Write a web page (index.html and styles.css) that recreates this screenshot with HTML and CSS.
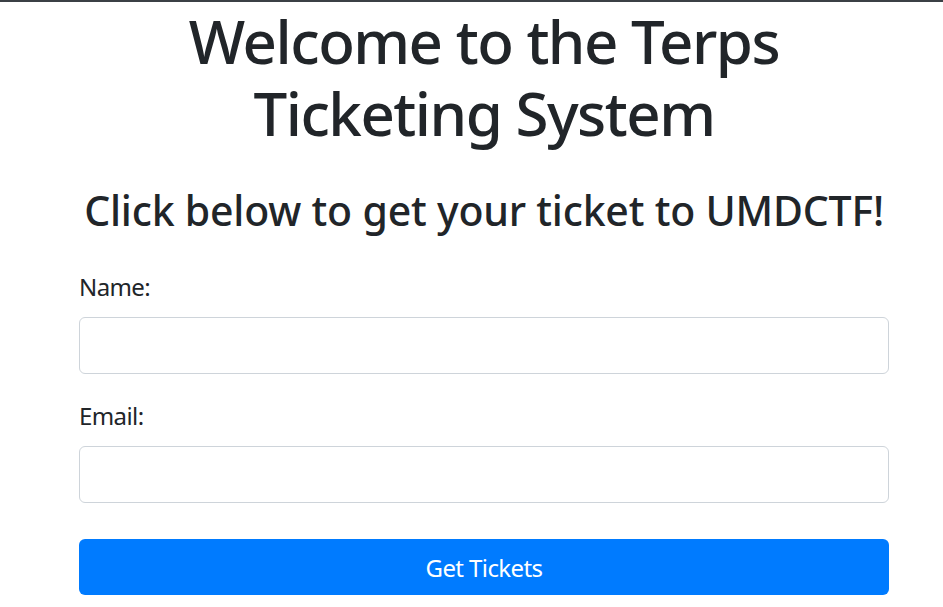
FILE: index.html
```html
<!DOCTYPE html>
<html lang="en">
<head>
<meta charset="utf-8">
<title>Terps Ticketing System</title>
<link rel="stylesheet" href="styles.css">
</head>
<body>
<div class="topbar"></div>
<main class="container">
  <h1 class="title">Welcome to the Terps Ticketing System</h1>
  <h3 class="subtitle">Click below to get your ticket to UMDCTF!</h3>
  <form class="ticket-form">
    <div class="form-group">
      <label class="form-label" for="name">Name:</label>
      <input class="form-control" type="text" id="name" name="name">
    </div>
    <div class="form-group">
      <label class="form-label" for="email">Email:</label>
      <input class="form-control" type="email" id="email" name="email">
    </div>
    <button class="btn-primary" type="button">Get Tickets</button>
  </form>
</main>
</body>
</html>
```

FILE: styles.css
```css
html, body {
  margin: 0;
  padding: 0;
  background: #ffffff;
}
body {
  font-family: "Noto Sans", "Open Sans", sans-serif;
  color: #212529;
}
.topbar {
  height: 2px;
  background: #3b4045;
}
.container {
  width: 810px;
  margin-left: 79px;
}
.title {
  font-size: 60px;
  line-height: 72px;
  font-weight: 500;
  letter-spacing: -1.5px;
  text-align: center;
  margin: 3px 0 0 0;
}
.subtitle {
  font-size: 41px;
  line-height: 50px;
  font-weight: 500;
  letter-spacing: -0.2px;
  white-space: nowrap;
  text-align: center;
  margin: 36px 0 0 0;
}
.ticket-form {
  margin-top: 34px;
}
.form-group {
  display: flex;
  flex-direction: column;
  margin-bottom: 24px;
}
.form-label {
  font-size: 24px;
  line-height: 36px;
  letter-spacing: -0.6px;
  margin-bottom: 12px;
}
.form-control {
  box-sizing: border-box;
  height: 57px;
  border: 1px solid #ced4da;
  border-radius: 6px;
  font: inherit;
  font-size: 24px;
  padding: 9px 18px;
  margin: 0;
}
.btn-primary {
  display: block;
  width: 100%;
  box-sizing: border-box;
  height: 56px;
  margin-top: 36px;
  border: none;
  border-radius: 6px;
  background: #007bff;
  color: #ffffff;
  font-family: inherit;
  font-size: 24px;
  letter-spacing: -0.6px;
}
```
